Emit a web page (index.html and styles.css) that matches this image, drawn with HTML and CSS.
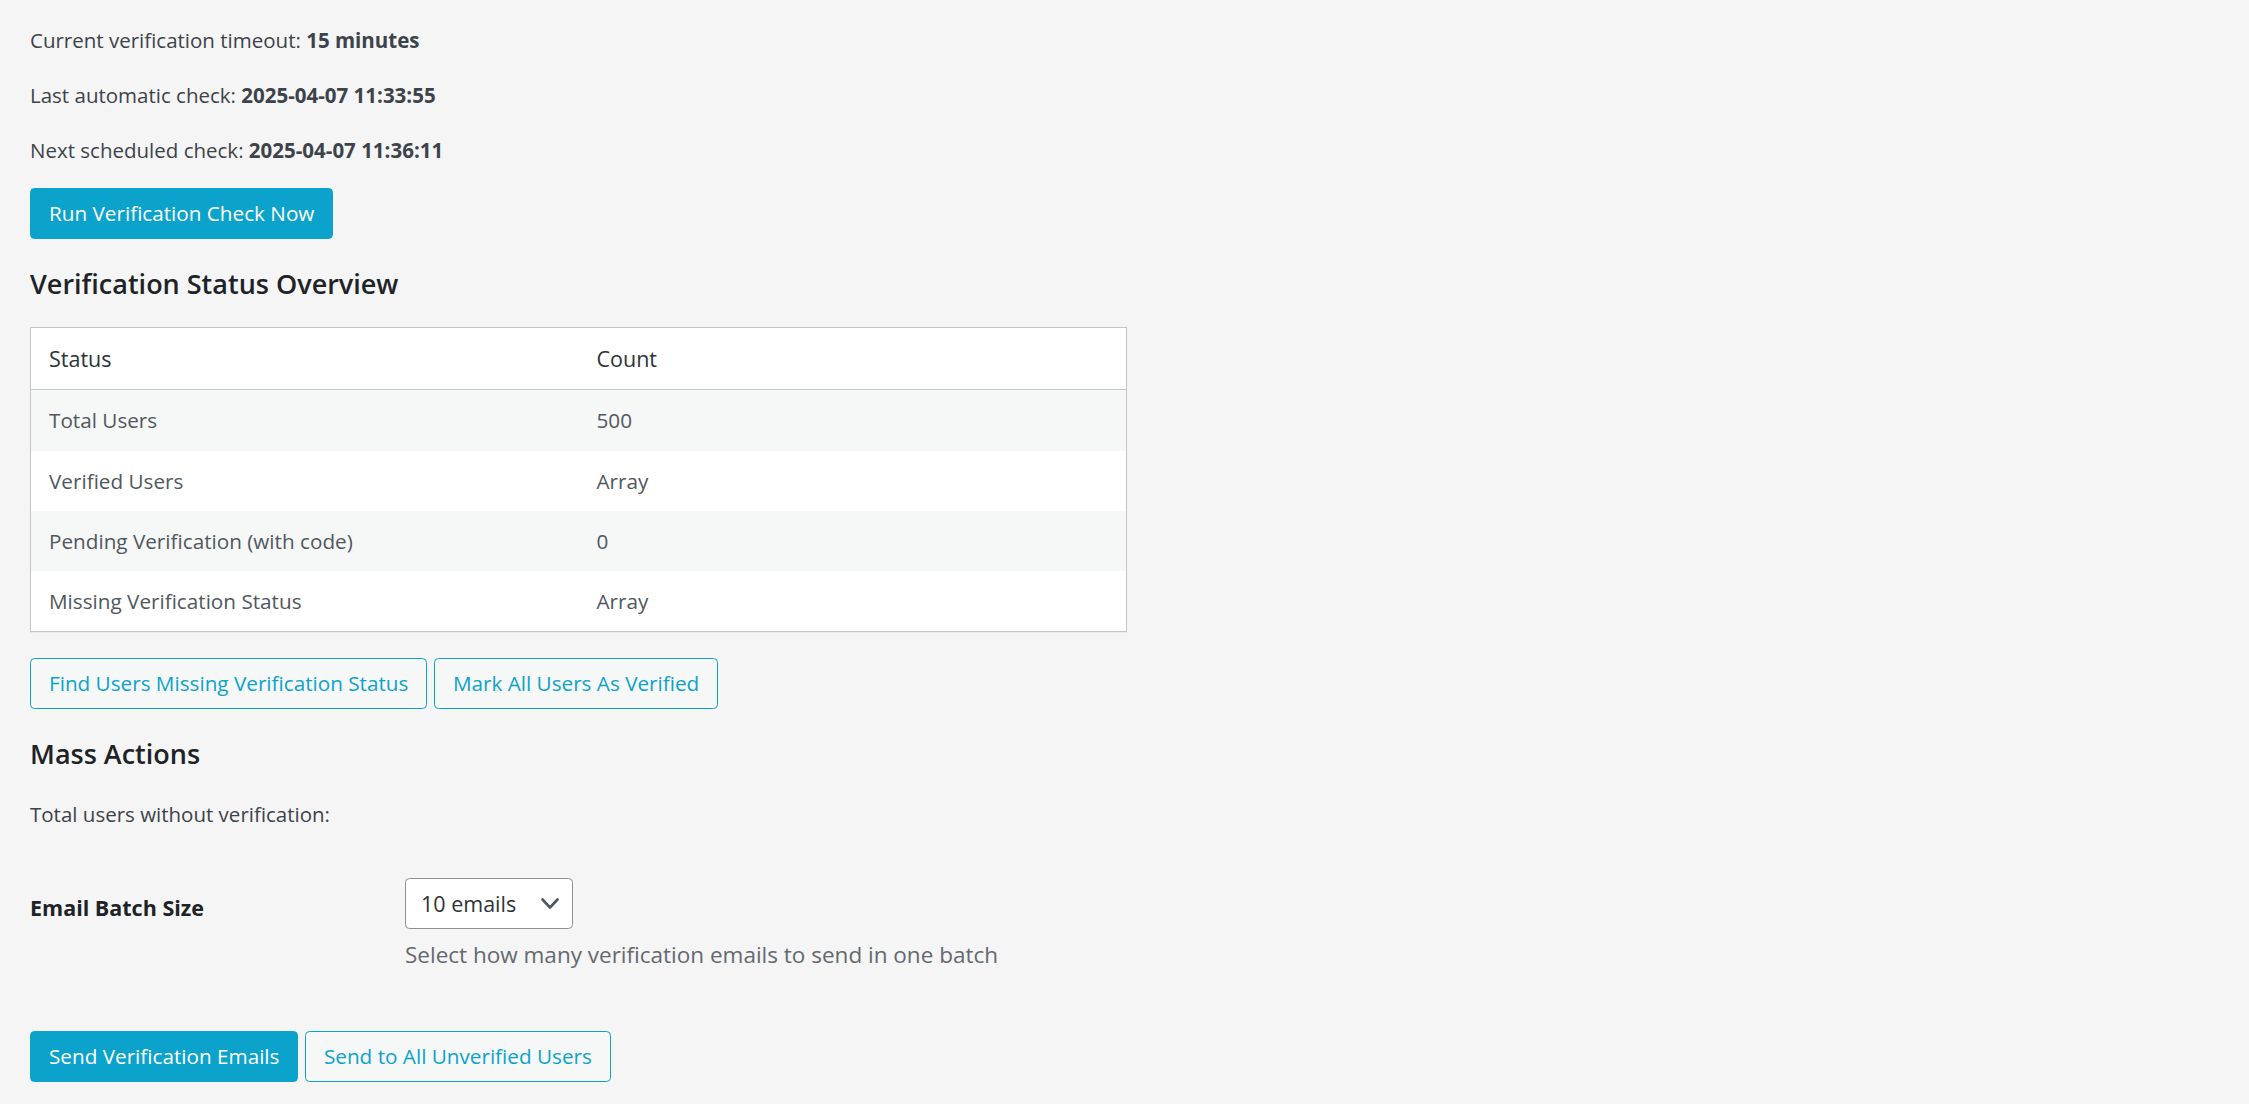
FILE: index.html
```html
<!DOCTYPE html>
<html lang="en">
<head>
  <meta charset="UTF-8" />
  <title>Email Verification</title>
  <meta name="viewport" content="width=device-width, initial-scale=1.0" />
  <link rel="stylesheet" href="styles.css">
</head>
<body>
  <div class="wrap">
    <p class="info">Current verification timeout: <strong>15 minutes</strong></p>
    <p class="info">Last automatic check: <strong>2025-04-07 11:33:55</strong></p>
    <p class="info">Next scheduled check: <strong>2025-04-07 11:36:11</strong></p>

    <div class="actions top">
      <button class="button primary">Run Verification Check Now</button>
    </div>

    <h2 class="title">Verification Status Overview</h2>
    <table class="widefat">
      <thead>
        <tr><th>Status</th><th>Count</th></tr>
      </thead>
      <tbody>
        <tr class="alt"><td>Total Users</td><td>500</td></tr>
        <tr><td>Verified Users</td><td>Array</td></tr>
        <tr class="alt"><td>Pending Verification (with code)</td><td>0</td></tr>
        <tr><td>Missing Verification Status</td><td>Array</td></tr>
      </tbody>
    </table>

    <div class="actions mid">
      <button class="button">Find Users Missing Verification Status</button>
      <button class="button">Mark All Users As Verified</button>
    </div>

    <h2 class="title mass">Mass Actions</h2>
    <p class="info">Total users without verification: </p>

    <div class="form-row">
      <label class="label" for="batchSize">Email Batch Size</label>
      <div class="field">
        <div class="select-wrap">
          <select id="batchSize">
            <option>10 emails</option>
            <option>25 emails</option>
            <option>50 emails</option>
            <option>100 emails</option>
          </select>
          <svg class="chevron" width="18" height="12" viewBox="0 0 18 12"><polyline points="1.5,1.5 9,9.5 16.5,1.5" fill="none" stroke="#50575e" stroke-width="2.6" stroke-linecap="round" stroke-linejoin="round"/></svg>
        </div>
        <p class="description">Select how many verification emails to send in one batch</p>
      </div>
    </div>

    <div class="actions bottom">
      <button class="button primary">Send Verification Emails</button>
      <button class="button">Send to All Unverified Users</button>
    </div>
  </div>
</body>
</html>
```

FILE: styles.css
```css
* { box-sizing: border-box; }
body { margin: 0; background: #f5f5f5; color: #3c434a; font-family: "Open Sans", "Noto Sans", sans-serif; }
.wrap { padding: 25px 30px 0; }

.info { margin: 0; font-size: 20.5px; line-height: 30px; }
.info + .info { margin-top: 25px; }
.info strong { font-weight: 700; }

.title { margin: 27px 0 25px; font-size: 27px; line-height: 36px; font-weight: 600; color: #1d2327; }
.title.mass { margin-bottom: 27px; }

.actions { display: flex; gap: 6.5px; }
.actions.top { margin-top: 23.3px; }
.actions.mid { margin-top: 26px; }
.actions.bottom { margin-top: 60.3px; }

.button { height: 51px; padding: 0 18px; border: 1px solid #0ba3cb; border-radius: 4.5px; background: #f6f7f7; color: #0ba3cb; font-family: inherit; font-size: 20.7px; line-height: 49px; cursor: pointer; }
.button.primary { background: #0ba3cb; color: #fff; }

.widefat { width: 1097px; border: 1px solid #c3c4c7; border-spacing: 0; background: #fff; box-shadow: 0 1px 1px rgba(0,0,0,0.04); }
.widefat th, .widefat td { width: 50%; padding: 0 18px; text-align: left; vertical-align: middle; line-height: 30px; }
.widefat th { height: 62px; border-bottom: 1px solid #c3c4c7; font-size: 21.5px; font-weight: 400; color: #2c3338; }
.widefat td { height: 60.3px; font-size: 20.7px; color: #50575e; }
.widefat tr.alt td { background: #f6f7f7; }

.form-row { display: flex; align-items: flex-start; margin-top: 49px; }
.label { flex: none; width: 375px; margin-top: 13.4px; font-size: 21.5px; line-height: 32px; font-weight: 700; color: #1d2327; }
.select-wrap { position: relative; width: 168px; }
.select-wrap select { width: 168px; height: 51px; padding: 0 40px 0 15px; border: 1px solid #8c8f94; border-radius: 4.5px; background: #fff; color: #2c3338; font-family: inherit; font-size: 21.5px; -webkit-appearance: none; appearance: none; }
.chevron { position: absolute; left: 136px; top: 19.5px; pointer-events: none; }
.description { margin: 8.4px 0 0; font-size: 22.5px; line-height: 33px; color: #646970; }
```
